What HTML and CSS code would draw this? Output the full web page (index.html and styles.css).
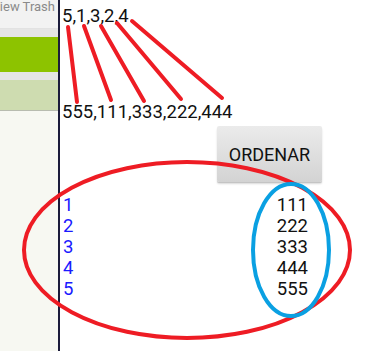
FILE: index.html
```html
<!DOCTYPE html>
<html lang="en">
<head>
    <meta charset="UTF-8">
    <meta name="viewport" content="width=device-width, initial-scale=1.0">
    <title>Ordenar</title>
    <link rel="stylesheet" href="styles.css">
</head>
<body>
    <div class="sidebar">
        <div class="trash">View Trash</div>
        <div class="dots"></div>
        <div class="tab-active"></div>
        <div class="dots"></div>
        <div class="tab"></div>
    </div>

    <div class="main">
        <div class="input">5,1,3,2,4</div>
        <div class="output">555,111,333,222,444</div>
        <div class="actions">
            <button class="btn">ORDENAR</button>
        </div>
        <div class="list">
            <div class="row"><span class="idx">1</span><span class="val">111</span></div>
            <div class="row"><span class="idx">2</span><span class="val">222</span></div>
            <div class="row"><span class="idx">3</span><span class="val">333</span></div>
            <div class="row"><span class="idx">4</span><span class="val">444</span></div>
            <div class="row"><span class="idx">5</span><span class="val">555</span></div>
        </div>
    </div>

    <!-- hand-drawn annotations -->
    <svg class="marks" width="375" height="351" viewBox="0 0 375 351">
        <g stroke="#ee1c24" stroke-width="4" stroke-linecap="round" fill="none">
            <line x1="68" y1="27" x2="77" y2="102"/>
            <line x1="84" y1="26" x2="111" y2="100"/>
            <line x1="101" y1="26" x2="144" y2="101"/>
            <line x1="117" y1="23" x2="181" y2="99"/>
            <line x1="132" y1="21" x2="222" y2="98"/>
            <ellipse cx="187" cy="250" rx="163" ry="88"/>
        </g>
        <ellipse cx="291" cy="250" rx="38" ry="66" stroke="#0aa0e2" stroke-width="4" fill="none"/>
    </svg>
</body>
</html>
```

FILE: styles.css
```css
body {
    margin: 0;
    height: 351px;
    display: flex;
    font-family: Roboto, "Liberation Sans", sans-serif;
    background: #fff;
    overflow: hidden;
}

.sidebar {
    width: 58px;
    flex-shrink: 0;
    background: #f7f8f2;
    border-right: 2px solid #1b1b3b;
    display: flex;
    flex-direction: column;
}
.trash {
    height: 28px;
    background: #f2f2f2;
    border-bottom: 1px solid #e2e2e2;
    color: #8a8a8a;
    font-size: 13px;
    line-height: 13px;
    display: flex;
    justify-content: flex-end;
    white-space: nowrap;
    overflow: hidden;
    padding-right: 3px;
    margin-top: -2px;
    padding-top: 2px;
}
.dots {
    height: 8px;
    background-color: #ececec;
    background-image: radial-gradient(#dcdcdc 0.6px, transparent 0.8px);
    background-size: 2px 2px;
}
.tab-active {
    height: 35px;
    background: #8dc300;
}
.tab {
    height: 30px;
    background: #cedcb0;
    border-bottom: 1px solid #b8bcb0;
}

.main {
    flex: 1;
    padding: 6px 67px 0 2px;
    font-size: 18.5px;
    line-height: 21px;
    color: #111;
}
.output { margin-top: 75px; }
.actions {
    display: flex;
    justify-content: flex-end;
    margin: 3px -14px 0 0;
}
.btn {
    width: 105px;
    height: 56px;
    font-family: inherit;
    font-size: 18px;
    color: #111;
    border: none;
    border-radius: 2px;
    background: linear-gradient(#ebebeb, #d3d3d3);
    box-shadow: 0 1px 0 #c4c4c4, 0 2px 2px rgba(0, 0, 0, 0.15);
    padding: 0;
}
.list { margin-top: 13px; }
.row {
    display: flex;
    justify-content: space-between;
}
.idx { color: #1a1aff; padding-left: 1px; }

.marks {
    position: absolute;
    top: 0;
    left: 0;
    pointer-events: none;
}
```
